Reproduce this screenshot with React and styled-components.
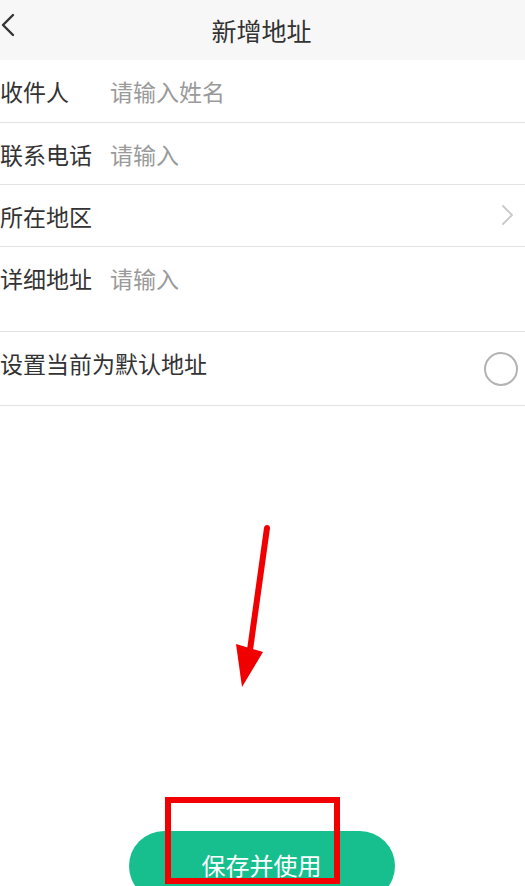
import styled, { createGlobalStyle } from 'styled-components'

const GlobalStyle = createGlobalStyle`
    html, body {
        margin: 0;
        padding: 0;
        background: #ffffff;
        overflow: hidden;
    }
    body {
        font-family: "Noto Sans CJK SC", "Noto Sans", sans-serif;
    }
`

const Page = styled.div`
    position: relative;
    width: 525px;
    height: 886px;
    display: flex;
    flex-direction: column;
    background: #ffffff;
    overflow: hidden;
`

const Header = styled.header`
    position: relative;
    height: 60px;
    flex-shrink: 0;
    display: flex;
    align-items: center;
    justify-content: center;
    background: #f7f7f7;
`

const BackButton = styled.div`
    position: absolute;
    left: 1px;
    top: 12px;
    width: 18px;
    height: 26px;
    display: flex;
    align-items: center;
`

const Title = styled.h1`
    margin: 0;
    font-size: 25px;
    font-weight: 400;
    color: #333333;
    line-height: 1;
    padding-right: 2px;
`

const Form = styled.section`
    display: flex;
    flex-direction: column;
`

const Row = styled.div`
    display: flex;
    align-items: ${p => (p.$top ? 'flex-start' : 'center')};
    height: ${p => p.$height}px;
    padding-top: ${p => p.$pad || 0}px;
    box-sizing: border-box;
    border-bottom: 1px solid #e3e3e3;
`

const Label = styled.span`
    width: 110px;
    flex-shrink: 0;
    font-size: 23px;
    line-height: 26px;
    color: #333333;
    white-space: nowrap;
`

const Placeholder = styled.span`
    flex: 1;
    font-size: 23px;
    line-height: 26px;
    color: #9a9a9a;
`

const Grow = styled.span`
    flex: 1;
`

const Radio = styled.span`
    align-self: center;
    width: 30px;
    height: 30px;
    margin-top: -${p => p.$pad || 0}px;
    border: 2px solid #b3b3b3;
    border-radius: 50%;
    margin-right: 7px;
    flex-shrink: 0;
`

const Arrowhead = styled.span`
    display: flex;
    margin-right: 10px;
`

const Footer = styled.footer`
    flex: 1;
    display: flex;
    justify-content: center;
    padding-top: 425px;
`

const SaveButton = styled.button`
    width: 266px;
    height: 70px;
    flex-shrink: 0;
    margin-right: 2px;
    border: none;
    border-radius: 35px;
    background: #17bf8e;
    color: #ffffff;
    font-family: inherit;
    font-size: 24px;
    display: flex;
    justify-content: center;
    padding-top: 16px;
    box-sizing: border-box;
`

const Highlight = styled.div`
    position: absolute;
    left: 165px;
    top: 797px;
    width: 175px;
    height: 87px;
    border: 6px solid #f20000;
    box-sizing: border-box;
    pointer-events: none;
`

const Arrow = styled.svg`
    position: absolute;
    left: 228px;
    top: 520px;
    pointer-events: none;
`

function Chevron({ dir, color, width }) {
    const d = dir === 'left' ? 'M12 2 L2 12 L12 22' : 'M2 2 L11 11 L2 20'
    return (
        <svg width="14" height="24" viewBox="0 0 14 24">
            <path d={d} fill="none" stroke={color} strokeWidth={width} strokeLinecap="round" strokeLinejoin="round" />
        </svg>
    )
}

function App() {
    return (
        <Page>
            <GlobalStyle />
            <Header>
                <BackButton>
                    <Chevron dir="left" color="#333333" width={2.4} />
                </BackButton>
                <Title>新增地址</Title>
            </Header>
            <Form>
                <Row $height={63}>
                    <Label>收件人</Label>
                    <Placeholder>请输入姓名</Placeholder>
                </Row>
                <Row $height={62}>
                    <Label>联系电话</Label>
                    <Placeholder>请输入</Placeholder>
                </Row>
                <Row $height={62}>
                    <Label>所在地区</Label>
                    <Grow />
                    <Arrowhead>
                        <Chevron dir="right" color="#c8c8c8" width={1.8} />
                    </Arrowhead>
                </Row>
                <Row $height={85} $top $pad={18}>
                    <Label>详细地址</Label>
                    <Placeholder>请输入</Placeholder>
                </Row>
                <Row $height={74} $top $pad={18}>
                    <Label>设置当前为默认地址</Label>
                    <Grow />
                    <Radio $pad={18} />
                </Row>
            </Form>
            <Footer>
                <SaveButton>保存并使用</SaveButton>
            </Footer>
            <Arrow width="50" height="175" viewBox="0 0 50 175">
                <line x1="39" y1="8" x2="22" y2="130" stroke="#f00000" strokeWidth="6" strokeLinecap="round" />
                <polygon points="8,124 35,132 14,167" fill="#f00000" />
            </Arrow>
            <Highlight />
        </Page>
    )
}

export default App
